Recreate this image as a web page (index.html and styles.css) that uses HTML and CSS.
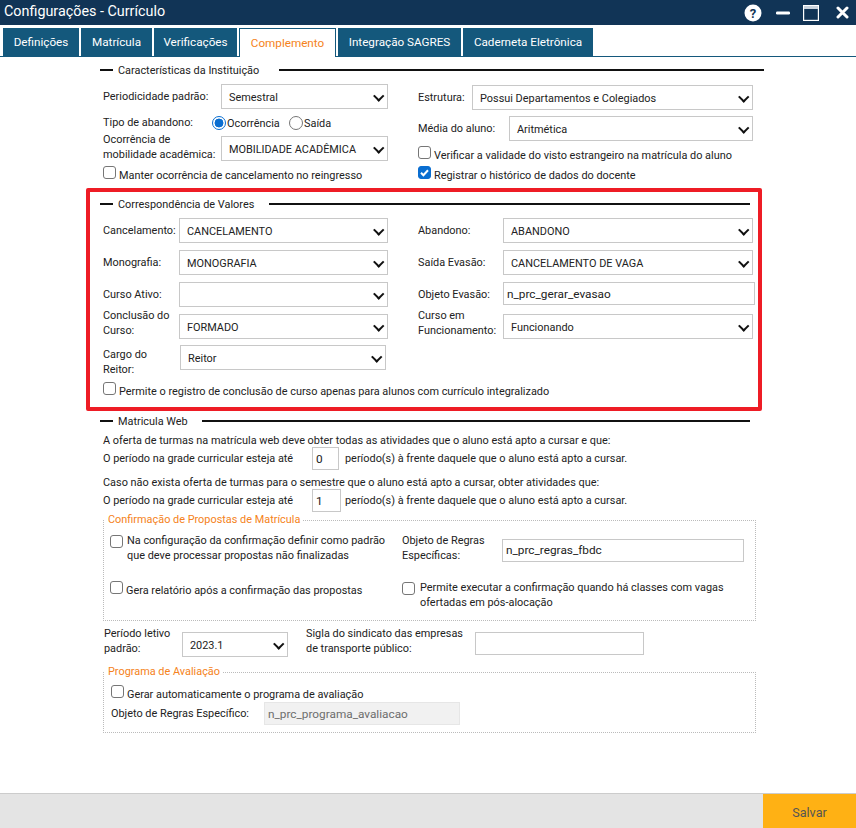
FILE: index.html
```html
<!DOCTYPE html>
<html lang="pt-BR">
<head>
<meta charset="utf-8">
<title>Configurações - Currículo</title>
<link rel="stylesheet" href="styles.css">
</head>
<body>
<div class="window">
  <header class="titlebar">
    <h1>Configurações - Currículo</h1>
    <div class="winbtns">
      <svg class="ic-help" width="18" height="18" viewBox="0 0 18 18"><circle cx="9" cy="9" r="8.5" fill="#fff"/><text x="9" y="13.5" text-anchor="middle" class="qmark">?</text></svg>
      <svg class="ic-min" width="14" height="18" viewBox="0 0 14 18"><rect x="0" y="7.5" width="14" height="3" rx="1.2" fill="#fff"/></svg>
      <svg class="ic-max" width="16" height="16" viewBox="0 0 16 16"><rect x="0.6" y="0.6" width="14.8" height="14.8" fill="none" stroke="#fff" stroke-width="1.2"/><rect x="1" y="1" width="14" height="3" fill="#c9d2dc"/></svg>
      <svg class="ic-close" width="13" height="13" viewBox="0 0 13 13"><path d="M2 2l9 9M11 2l-9 9" stroke="#fff" stroke-width="3" stroke-linecap="round"/></svg>
    </div>
  </header>
  <nav class="tabs">
    <span class="tab t1">Definições</span>
    <span class="tab t2">Matrícula</span>
    <span class="tab t3">Verificações</span>
    <span class="tab active t4">Complemento</span>
    <span class="tab t5">Integração SAGRES</span>
    <span class="tab t6">Caderneta Eletrônica</span>
  </nav>
  <main class="content">
    <section class="sec first">
      <div class="legend"><span class="dash"></span><span class="ltext g20">Características da Instituição</span><span class="rule"></span></div>
      <div class="cols">
        <div class="col left lift">
          <div class="row r25"><label class="lb w118">Periodicidade padrão:</label><div class="sel s167">Semestral</div></div>
          <div class="row r-radio"><label class="lb w109">Tipo de abandono:</label>
            <span class="radio on"></span><span class="rl r1">Ocorrência</span>
            <span class="radio"></span><span class="rl">Saída</span></div>
          <div class="row r25"><label class="lb w118 up2">Ocorrência de<br>mobilidade acadêmica:</label><div class="sel s167">MOBILIDADE ACADÊMICA</div></div>
          <div class="row chk c1"><span class="cb"></span><span>Manter ocorrência de cancelamento no reingresso</span></div>
        </div>
        <div class="col right">
          <div class="row r25"><label class="lb w54">Estrutura:</label><div class="sel grow">Possui Departamentos e Colegiados</div></div>
          <div class="row r25 mt6"><label class="lb w91">Média do aluno:</label><div class="sel grow">Aritmética</div></div>
          <div class="row chk c2"><span class="cb"></span><span>Verificar a validade do visto estrangeiro na matrícula do aluno</span></div>
          <div class="row chk"><span class="cb checked"><svg width="13" height="13" viewBox="0 0 13 13"><path d="M3 6.8l2.4 2.4L10 4.2" fill="none" stroke="#fff" stroke-width="2"/></svg></span><span>Registrar o histórico de dados do docente</span></div>
        </div>
      </div>
    </section>

    <section class="sec boxed">
      <div class="legend"><span class="dash"></span><span class="ltext g15">Correspondência de Valores</span><span class="rule"></span></div>
      <div class="cols">
        <div class="col left">
          <div class="row r25"><label class="lb w76">Cancelamento:</label><div class="sel s209">CANCELAMENTO</div></div>
          <div class="row r25 mt7"><label class="lb w76">Monografia:</label><div class="sel s209">MONOGRAFIA</div></div>
          <div class="row r25 mt7"><label class="lb w76">Curso Ativo:</label><div class="sel s209"></div></div>
          <div class="row r25 mt7"><label class="lb w76 up4">Conclusão do<br>Curso:</label><div class="sel s209">FORMADO</div></div>
          <div class="row r25 mt6"><label class="lb w77 dn4">Cargo do<br>Reitor:</label><div class="sel s206">Reitor</div></div>
        </div>
        <div class="col right">
          <div class="row r25"><label class="lb w85">Abandono:</label><div class="sel grow">ABANDONO</div></div>
          <div class="row r25 mt7"><label class="lb w85">Saída Evasão:</label><div class="sel grow">CANCELAMENTO DE VAGA</div></div>
          <div class="row r25 mt7 ev"><label class="lb w85">Objeto Evasão:</label><div class="inp grow">n_prc_gerar_evasao</div></div>
          <div class="row r25 mt7"><label class="lb w85 up4">Curso em<br>Funcionamento:</label><div class="sel grow">Funcionando</div></div>
        </div>
      </div>
      <div class="row chk c4"><span class="cb"></span><span>Permite o registro de conclusão de curso apenas para alunos com currículo integralizado</span></div>
    </section>

    <section class="sec web">
      <div class="legend"><span class="dash"></span><span class="ltext g14">Matricula Web</span><span class="rule"></span></div>
      <p class="line l1">A oferta de turmas na matrícula web deve obter todas as atividades que o aluno está apto a cursar e que:</p>
      <div class="row line-in"><span class="w209">O período na grade curricular esteja até</span><div class="inp num n27">0</div><span>período(s) à frente daquele que o aluno está apto a cursar.</span></div>
      <p class="line l2">Caso não exista oferta de turmas para o semestre que o aluno está apto a cursar, obter atividades que:</p>
      <div class="row line-in"><span class="w209">O período na grade curricular esteja até</span><div class="inp num n29">1</div><span>período(s) à frente daquele que o aluno está apto a cursar.</span></div>

      <fieldset class="fs fs1">
        <legend>Confirmação de Propostas de Matrícula</legend>
        <div class="fgrid">
          <div class="row top c-a"><span class="cb"></span><span>Na configuração da confirmação definir como padrão<br>que deve processar propostas não finalizadas</span></div>
          <div class="row top"><label class="lb w100">Objeto de Regras<br>Específicas:</label><div class="inp i242">n_prc_regras_fbdc</div></div>
          <div class="row top g2"><span class="cb"></span><span class="g2t">Gera relatório após a confirmação das propostas</span></div>
          <div class="row top g3"><span class="cb"></span><span>Permite executar a confirmação quando há classes com vagas<br>ofertadas em pós-alocação</span></div>
        </div>
      </fieldset>

      <div class="row top periodo">
        <label class="lb w79">Período letivo<br>padrão:</label><div class="sel s106">2023.1</div>
        <label class="lb w169">Sigla do sindicato das empresas<br>de transporte público:</label><div class="inp i169"></div>
      </div>

      <fieldset class="fs fs2">
        <legend>Programa de Avaliação</legend>
        <div class="row chk c5"><span class="cb"></span><span>Gerar automaticamente o programa de avaliação</span></div>
        <div class="row c6"><label class="lb w153">Objeto de Regras Específico:</label><div class="inp dis">n_prc_programa_avaliacao</div></div>
      </fieldset>
    </section>
  </main>
  <footer class="footer"><button class="save" type="button">Salvar</button></footer>
</div>
</body>
</html>
```
FILE: styles.css
```css
* { box-sizing: border-box; }
html, body { margin: 0; padding: 0; }
body { font-family: Roboto, "Open Sans", sans-serif; font-size: 10.9px; color: #222; background: #fff; }
.window { width: 856px; height: 828px; display: flex; flex-direction: column; overflow: hidden; }

.titlebar { height: 25px; background: #113456; display: flex; align-items: center; justify-content: space-between; padding: 0 7px 0 4px; flex: none; }
.titlebar h1 { margin: 0 0 2px; font-size: 14.35px; font-weight: 400; color: #fff; }
.winbtns { display: flex; align-items: center; }
.ic-min { margin-left: 14px; }
.ic-max { margin-left: 13px; }
.ic-close { margin-left: 17px; }
.qmark { font: 700 13px Roboto, sans-serif; fill: #113456; }

.tabs { height: 32px; padding: 3px 0 0 3px; border-bottom: 1px solid #14587c; display: flex; gap: 2px; flex: none; }
.tab { background: #14587c; color: #fff; font-size: 11.7px; height: 28px; display: flex; align-items: center; justify-content: center; flex: none; }
.t1 { width: 76px; } .t2 { width: 71px; } .t3 { width: 83px; }
.t4 { width: 97px; } .t5 { width: 123px; } .t6 { width: 130px; }
.tab.active { background: #fff; color: #f58220; border: 1px solid #14587c; border-bottom: 0; height: 29px; }

.content { flex: 1; padding: 0 0 0 103px; }
.sec { width: 653px; }
.first { padding-top: 7px; height: 131px; }
.legend { display: flex; align-items: center; height: 12px; margin-left: -3px; }
.dash { width: 13px; height: 2.5px; background: #111; flex: none; }
.ltext { padding-left: 5px; white-space: nowrap; }
.g20 { padding-right: 20px; } .g15 { padding-right: 15px; } .g14 { padding-right: 14px; }
.rule { flex: 1; height: 2.5px; background: #111; }
.first .legend { width: 664px; }

.cols { display: flex; margin-top: 9px; }
.col { display: flex; flex-direction: column; }
.left { width: 315px; }
.right { width: 335px; }
.lift { margin-top: -1px; }
.row { display: flex; align-items: center; white-space: nowrap; }
.r25 { height: 25px; }
.mt6 { margin-top: 6px; } .mt7 { margin-top: 7px; }
.lb { flex: none; line-height: 15px; }
.up2 { margin-bottom: 4px; } .up4 { margin-bottom: 8px; } .dn4 { margin-top: 8px; }
.w54 { width: 54px; } .w76 { width: 76px; } .w77 { width: 77px; } .w79 { width: 79px; } .w85 { width: 85px; } .w91 { width: 91px; }
.w100 { width: 100px; } .w109 { width: 109px; } .w118 { width: 118px; } .w153 { width: 153px; } .w169 { width: 169px; } .w209 { width: 209px; }

.sel, .inp { border: 1px solid #c8c8c8; background: #fff; color: #222; display: flex; align-items: center; position: relative; height: 25px; white-space: nowrap; flex: none; }
.sel { padding: 1px 0 0 7px; }
.inp { padding-left: 3px; height: 23px; font-size: 11.8px; }
.sel::after { content: ""; position: absolute; right: 5px; top: 6.5px; width: 5.5px; height: 5.5px; border: solid #111; border-width: 0 2px 2px 0; transform: rotate(45deg); }
.grow { flex: 1; }
.s167 { width: 167px; } .s209 { width: 209px; } .s206 { width: 206px; } .s106 { width: 106px; }

.r-radio { height: 27px; }
.radio { width: 14px; height: 14px; border-radius: 50%; border: 1px solid #767676; flex: none; background: #fff; }
.radio.on { border: 1.5px solid #0a6ed1; background: radial-gradient(circle, #0a6ed1 0 4.2px, #fff 4.7px); }
.rl { padding: 1px 0 0 1px; }
.r1 { width: 63px; }

.cb { width: 13px; height: 13px; border: 1px solid #767676; border-radius: 3px; background: #fff; flex: none; margin-right: 3px; margin-bottom: 5px; display: flex; }
.cb.checked { background: #0a6ed1; border-color: #0a6ed1; }
.cb.checked svg { margin: -1px; }
.chk { height: 20px; }
.c1, .c2 { margin-top: 4px; }

.boxed { width: 676px; height: 223px; margin: 0 0 0 -17px; border: 4px solid #ee1c25; border-radius: 2px; padding: 6px 0 0 13px; }
.boxed .legend { width: 650px; }
.boxed .cols { margin-top: 8px; }
.ev .inp { margin-right: -2px; align-self: flex-start; }
.c4 { margin-top: 11px; }

.web { padding-top: 4px; }
.web .legend { width: 650px; }
.line { margin: 0; line-height: 15px; white-space: nowrap; }
.l1 { margin-top: 6px; margin-bottom: -1px; }
.l2 { margin-top: 5px; margin-bottom: -1px; }
.line-in { height: 23px; }
.num { margin-right: 6px; }
.n27 { width: 27px; } .n29 { width: 29px; margin-right: 4px; }

.fs { margin: 0; padding: 0; border: 1px dotted #bbb; width: 653px; }
.fs legend { color: #f58220; padding: 0 3px; margin-left: 1px; line-height: 14px; }
.fs1 { margin-top: 1px; height: 108px; }
.fgrid { display: grid; grid-template-columns: 292px 1fr; grid-template-rows: 47px 44px; padding: 6px 0 0 6px; }
.top { align-items: flex-start; line-height: 15px; }
.top .cb { margin-top: 2px; margin-bottom: 0; }
.c-a .cb { margin-right: 4px; }
.i242 { width: 242px; margin-top: 6px; }
.g2 .cb { margin-top: 1px; }
.g2t { margin-top: 3px; }
.g3 .cb { margin-right: 5px; }

.periodo { margin-top: 5px; height: 31px; }
.periodo .w79 { padding-left: 1px; }
.periodo .sel { margin-top: 6px; }
.periodo .w169 { margin-left: 18px; }
.i169 { width: 169px; margin-top: 6px; }

.fs2 { margin-top: 8px; height: 68px; }
.c5 { padding-left: 7px; margin-top: 5px; }
.c6 { padding-left: 7px; height: 23px; margin-top: -2px; }
.dis { width: 196px; background: #f1f1f1; border-color: #e6e6e6; color: #6d6d6d; }

.footer { height: 35px; background: #e4e4e4; border-top: 1px solid #ccc; display: flex; justify-content: flex-end; flex: none; }
.save { width: 93px; height: 34px; border: 0; padding: 3px 0 0; background: #ffb114; color: #555; font: 12.6px Roboto, sans-serif; }
```
